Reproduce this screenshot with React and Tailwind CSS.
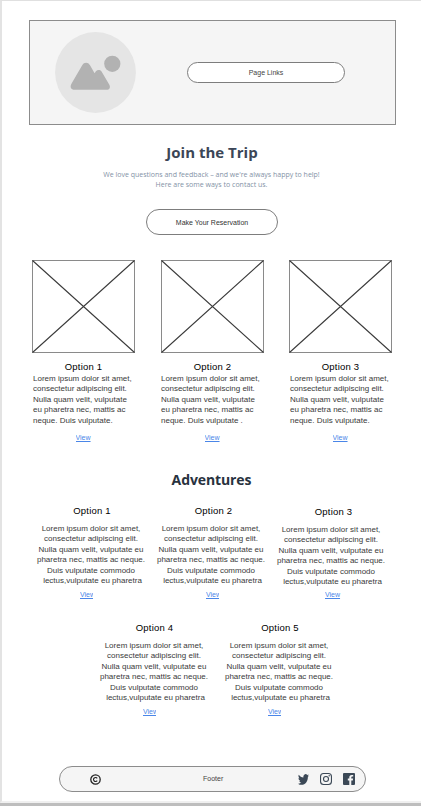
import React from "react";

const arial = "font-['Liberation_Sans',Arial,sans-serif]";

function Heading({ children, className }) {
  return (
    <h2 className={`text-center font-['Open_Sans',sans-serif] leading-[20px] font-bold whitespace-nowrap ${className}`}>
      {children}
    </h2>
  );
}

function Lines({ lines, className }) {
  return (
    <p className={`text-[8px] leading-[10.5px] text-[#3a3a3a] whitespace-nowrap ${className}`}>
      {lines.map((line) => (
        <span key={line} className="block">{line}</span>
      ))}
    </p>
  );
}

function ViewLink({ clipped }) {
  return (
    <a className={`block overflow-hidden text-[7px] leading-[9px] text-[#4a86e8] underline whitespace-nowrap ${clipped ? "w-[13px]" : "w-[16px]"}`}>
      View
    </a>
  );
}

function ImageBox() {
  return (
    <svg className="block h-[93px] w-[103px]" viewBox="0 0 103 93" fill="none">
      <rect x="0.5" y="0.5" width="102" height="92" stroke="#8a8a8a" />
      <path d="M0.5 0.5 L102.5 92.5 M102.5 0.5 L0.5 92.5" stroke="#3c3c3c" strokeWidth="1.1" />
    </svg>
  );
}

function OptionCard({ title, last, className, textClass = "ml-[1px]" }) {
  return (
    <article className={`flex w-[103px] flex-col ${className}`}>
      <ImageBox />
      <h3 className="mt-[8px] text-center text-[9.5px] leading-[12px] tracking-[0.2px] text-black">{title}</h3>
      <Lines
        className={`pt-[0.5px] ${textClass}`}
        lines={["Lorem ipsum dolor sit amet,", "consectetur adipiscing elit.", "Nulla quam velit, vulputate", "eu pharetra nec, mattis ac", last]}
      />
      <div className="mt-[7px] flex justify-center">
        <ViewLink />
      </div>
    </article>
  );
}

function Adventure({ title, clipped, className, titleClass, linkClass }) {
  return (
    <article className={`flex w-[110px] flex-col ${className}`}>
      <h3 className={`text-center text-[9.5px] leading-[12px] tracking-[0.2px] text-black ${titleClass}`}>{title}</h3>
      <Lines
        className="mt-[6.5px] text-center"
        lines={["Lorem ipsum dolor sit amet,", "consectetur adipiscing elit.", "Nulla quam velit, vulputate eu", "pharetra nec, mattis ac neque.", "Duis vulputate commodo"]}
      />
      <Lines className="pl-[3px] text-center" lines={["lectus,vulputate eu pharetra"]} />
      <div className={`flex ${linkClass}`}>
        <ViewLink clipped={clipped} />
      </div>
    </article>
  );
}

function Logo() {
  return (
    <svg className="h-[81px] w-[81px]" viewBox="0 0 81 81">
      <circle cx="40.5" cy="40.5" r="40.4" fill="#e5e5e5" />
      <circle cx="57.3" cy="31.8" r="8.1" fill="#b2b2b2" />
      <path
        d="M16.6 51.5 L27.2 33.3 C29 30 33.2 30 35 33.3 L39.6 41.2 L40.9 39.3 C42.5 37.5 45 37.5 46.4 39.3 L54.2 52.5 C55.8 55.5 54.6 57.8 51.5 57.8 H19.7 C16 57.8 14.5 55 16.6 51.5Z"
        fill="#b2b2b2"
      />
    </svg>
  );
}

function Twitter() {
  return (
    <svg className="h-[11px] w-[11px]" viewBox="0 2 24 20" preserveAspectRatio="none" fill="#3b4856">
      <path d="M23.95 4.57a10 10 0 0 1-2.82.77 4.96 4.96 0 0 0 2.16-2.72c-.95.55-2 .95-3.13 1.18a4.92 4.92 0 0 0-8.38 4.48C7.69 8.1 4.07 6.13 1.64 3.16a4.82 4.82 0 0 0-.67 2.48c0 1.71.87 3.21 2.19 4.1a4.9 4.9 0 0 1-2.23-.62v.06a4.92 4.92 0 0 0 3.95 4.83 5 5 0 0 1-2.21.08 4.94 4.94 0 0 0 4.6 3.42A9.87 9.87 0 0 1 0 19.54a14 14 0 0 0 7.55 2.21c9.05 0 14-7.5 14-13.98 0-.21 0-.42-.02-.63a9.94 9.94 0 0 0 2.46-2.55z" />
    </svg>
  );
}

function Instagram() {
  return (
    <svg className="h-[12px] w-[12px]" viewBox="0 0 12 12" fill="none" stroke="#3b4856" strokeWidth="1.1">
      <rect x="0.55" y="0.55" width="10.9" height="10.9" rx="3" />
      <circle cx="6" cy="6" r="2.5" />
      <circle cx="9.2" cy="2.8" r="0.7" fill="#3b4856" stroke="none" />
    </svg>
  );
}

function Facebook() {
  return (
    <svg className="h-[12px] w-[12px]" viewBox="0 0 12 12">
      <path
        d="M1 0H11Q12 0 12 1V11Q12 12 11 12H8.3V7.4H9.8L10.1 5.6H8.3V4.5C8.3 3.9 8.6 3.6 9.2 3.6H10.2V1.9H8.6C7.1 1.9 6.3 2.8 6.3 4.3V5.6H4.8V7.4H6.3V12H1Q0 12 0 11V1Q0 0 1 0Z"
        fill="#3b4856"
      />
    </svg>
  );
}

function Copyright() {
  return (
    <svg className="h-[11px] w-[11px]" viewBox="0 0 11 11" fill="none" stroke="#222">
      <circle cx="5.5" cy="5.5" r="4.7" strokeWidth="1.3" />
      <path d="M7.2 4.4A2 2 0 1 0 7.2 6.6" strokeWidth="1.1" />
    </svg>
  );
}

export default function App() {
  return (
    <div className={`flex h-[806px] w-[421px] flex-col overflow-hidden bg-[#bebebe] ${arial}`}>
      <div className="flex h-[803px] flex-col border-t border-b-2 border-l-2 border-t-[#e0e0e0] border-b-[#f0f0f0] border-l-[#e3e3e3] bg-white">
        <header className="mt-[19px] ml-[27px] flex h-[105px] w-[367px] shrink-0 items-center border border-[#8c8c8c] bg-[#f5f5f5] pl-[25px]">
          <Logo />
          <div className="ml-[51px] flex h-[21px] w-[158px] items-center justify-center rounded-full border border-[#7d7d7d] bg-white pt-px text-[7px] text-[#444]">
            Page Links
          </div>
        </header>

        <Heading className="mt-[17px] pl-[1px] text-[15px] text-[#3b4657]">Join the Trip</Heading>
        <p className="mt-[8px] text-center font-['Open_Sans',sans-serif] text-[7px] leading-[10px] whitespace-nowrap text-[#8492a6]">
          We love questions and feedback – and we're always happy to help!
          <br />
          Here are some ways to contact us.
        </p>
        <button className="mt-[19px] ml-[144px] h-[26px] w-[132px] shrink-0 rounded-full border border-[#7d7d7d] bg-white pt-[2px] text-[7px] text-[#333]">
          Make Your Reservation
        </button>

        <section className="mt-[25px] ml-[30px] flex h-[183px] shrink-0">
          <OptionCard title="Option 1" last="neque. Duis vulputate." className="mr-[26px]" />
          <OptionCard title="Option 2" last="neque. Duis vulputate ." className="mr-[25px]" textClass="" />
          <OptionCard title="Option 3" last="neque. Duis vulputate." className="" />
        </section>

        <Heading className="mt-[27px] text-[14px] tracking-[-0.1px] text-[#28323e]">Adventures</Heading>

        <section className="mt-[15px] ml-[34px] flex h-[96px] shrink-0">
          <Adventure title="Option 1" clipped className="mr-[10px]" titleClass="pl-[2px]" linkClass="mt-[3.5px] pl-[44px]" />
          <Adventure title="Option 2" clipped className="mr-[10px]" titleClass="pl-[5px]" linkClass="mt-[3.5px] pl-[50px]" />
          <Adventure title="Option 3" className="pt-[1px]" titleClass="pl-[5px]" linkClass="mt-[2.5px] pl-[49px]" />
        </section>

        <section className="mt-[21px] ml-[97px] flex h-[96px] shrink-0">
          <Adventure title="Option 4" clipped className="mr-[15px]" titleClass="pl-[1px]" linkClass="mt-[3.5px] pl-[44px]" />
          <Adventure title="Option 5" clipped className="" titleClass="pl-[2px]" linkClass="mt-[3.5px] pl-[44px]" />
        </section>

        <footer className="mt-[48px] ml-[57px] flex h-[26px] w-[307px] shrink-0 items-center rounded-full border border-[#8c8c8c] bg-[#f5f5f5] pl-[30px]">
          <Copyright />
          <span className="ml-[102px] w-[21px] text-[7px] text-[#444]">Footer</span>
          <div className="ml-[74px] flex items-center gap-[11px]">
            <Twitter />
            <Instagram />
            <Facebook />
          </div>
        </footer>
      </div>
    </div>
  );
}
